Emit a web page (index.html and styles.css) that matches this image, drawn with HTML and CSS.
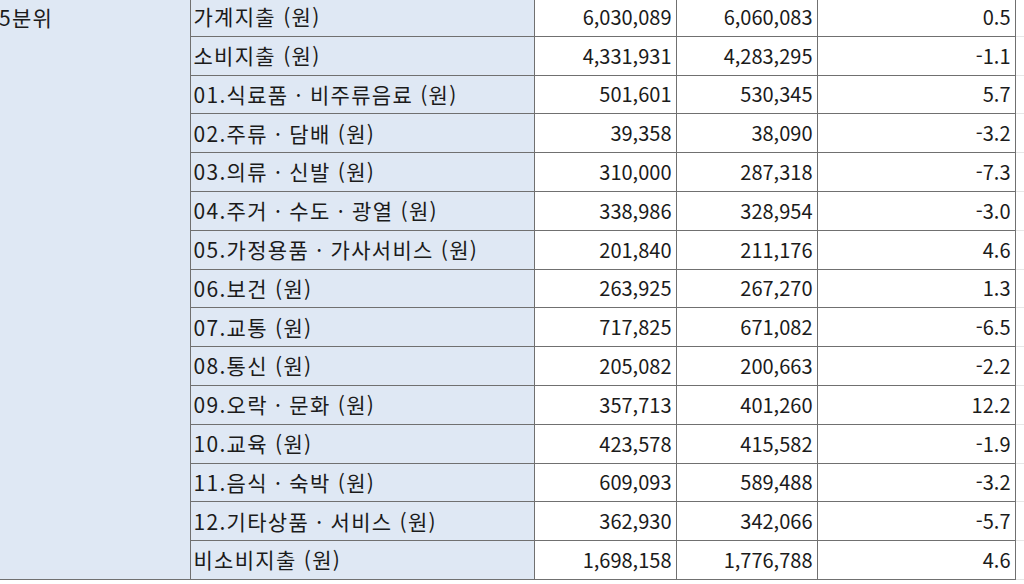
FILE: index.html
```html
<!DOCTYPE html>
<html lang="ko">
<head>
<meta charset="utf-8">
<title>5분위 가계지출</title>
<link rel="stylesheet" href="styles.css">
</head>
<body>
<table class="sheet">
  <colgroup>
    <col class="c-group">
    <col class="c-item">
    <col class="c-num">
    <col class="c-num2">
    <col class="c-rate">
    <col class="c-rest">
  </colgroup>
  <tbody>
    <tr>
      <td class="group" rowspan="15">5분위</td>
      <td class="item">가계지출 (원)</td>
      <td class="num">6,030,089</td>
      <td class="num">6,060,083</td>
      <td class="num">0.5</td>
      <td class="rest"></td>
    </tr>
    <tr><td class="item">소비지출 (원)</td><td class="num">4,331,931</td><td class="num">4,283,295</td><td class="num">-1.1</td><td class="rest"></td></tr>
    <tr><td class="item">01.식료품 · 비주류음료 (원)</td><td class="num">501,601</td><td class="num">530,345</td><td class="num">5.7</td><td class="rest"></td></tr>
    <tr><td class="item">02.주류 · 담배 (원)</td><td class="num">39,358</td><td class="num">38,090</td><td class="num">-3.2</td><td class="rest"></td></tr>
    <tr><td class="item">03.의류 · 신발 (원)</td><td class="num">310,000</td><td class="num">287,318</td><td class="num">-7.3</td><td class="rest"></td></tr>
    <tr><td class="item">04.주거 · 수도 · 광열 (원)</td><td class="num">338,986</td><td class="num">328,954</td><td class="num">-3.0</td><td class="rest"></td></tr>
    <tr><td class="item">05.가정용품 · 가사서비스 (원)</td><td class="num">201,840</td><td class="num">211,176</td><td class="num">4.6</td><td class="rest"></td></tr>
    <tr><td class="item">06.보건 (원)</td><td class="num">263,925</td><td class="num">267,270</td><td class="num">1.3</td><td class="rest"></td></tr>
    <tr><td class="item">07.교통 (원)</td><td class="num">717,825</td><td class="num">671,082</td><td class="num">-6.5</td><td class="rest"></td></tr>
    <tr><td class="item">08.통신 (원)</td><td class="num">205,082</td><td class="num">200,663</td><td class="num">-2.2</td><td class="rest"></td></tr>
    <tr><td class="item">09.오락 · 문화 (원)</td><td class="num">357,713</td><td class="num">401,260</td><td class="num">12.2</td><td class="rest"></td></tr>
    <tr><td class="item">10.교육 (원)</td><td class="num">423,578</td><td class="num">415,582</td><td class="num">-1.9</td><td class="rest"></td></tr>
    <tr><td class="item">11.음식 · 숙박 (원)</td><td class="num">609,093</td><td class="num">589,488</td><td class="num">-3.2</td><td class="rest"></td></tr>
    <tr><td class="item">12.기타상품 · 서비스 (원)</td><td class="num">362,930</td><td class="num">342,066</td><td class="num">-5.7</td><td class="rest"></td></tr>
    <tr><td class="item">비소비지출 (원)</td><td class="num">1,698,158</td><td class="num">1,776,788</td><td class="num">4.6</td><td class="rest"></td></tr>
  </tbody>
</table>
</body>
</html>
```
FILE: styles.css
```css
html, body {
  margin: 0;
  padding: 0;
  background: #ffffff;
  overflow: hidden;
}

body {
  width: 1024px;
  height: 584px;
  font-family: "Noto Sans CJK KR", "Noto Sans", sans-serif;
  font-size: 20px;
  color: #1b1b1b;
}

.sheet {
  border-collapse: collapse;
  table-layout: fixed;
  width: 1040px;
  margin-top: -3px;
}

.c-group { width: 190px; }
.c-item { width: 344px; }
.c-num { width: 142px; }
.c-num2 { width: 141px; }
.c-rate { width: 198px; }
.c-rest { width: 25px; }

.sheet tr {
  height: 38.8px;
}

.sheet td {
  padding: 0 4px;
  border: 1px solid #707070;
  line-height: 1.2;
  white-space: nowrap;
  overflow: hidden;
  vertical-align: middle;
}

.group {
  background: #dfe8f4;
  vertical-align: top !important;
  padding: 7px 0 0 0 !important;
  border-left: none !important;
  font-size: 21px;
  letter-spacing: 1.3px;
  text-indent: -1px;
}

.item {
  background: #dfe8f4;
  text-align: left;
  padding-left: 3px !important;
  font-size: 21px;
  letter-spacing: 1.3px;
}

.num {
  text-align: right;
  padding-right: 4px !important;
}

.rest {
  border-top: none !important;
  border-bottom: 1px solid #e6e6e6 !important;
  border-right: 1px solid #e6e6e6 !important;
}
```
